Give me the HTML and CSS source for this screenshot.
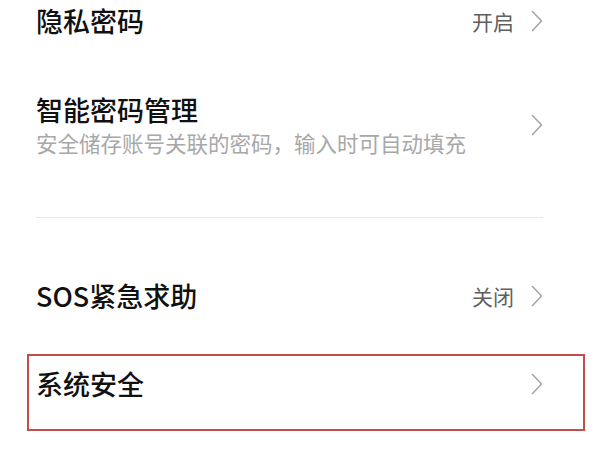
FILE: index.html
```html
<!DOCTYPE html>
<html lang="zh-CN">
<head>
<meta charset="utf-8">
<link rel="stylesheet" href="styles.css">
</head>
<body>
<div class="list">
  <div class="row row-first">
    <div class="main"><div class="title">隐私密码</div></div>
    <span class="value">开启</span>
    <svg class="chev" viewBox="0 0 12 22" width="12" height="22"><polyline points="1.5,1.5 10.5,11 1.5,20.5"/></svg>
  </div>
  <div class="row row-pwd">
    <div class="main">
      <div class="title">智能密码管理</div>
      <div class="sub">安全储存账号关联的密码，输入时可自动填充</div>
    </div>
    <svg class="chev" viewBox="0 0 12 22" width="12" height="22"><polyline points="1.5,1.5 10.5,11 1.5,20.5"/></svg>
  </div>
  <div class="divider"></div>
  <div class="row row-sos">
    <div class="main"><div class="title">SOS紧急求助</div></div>
    <span class="value">关闭</span>
    <svg class="chev" viewBox="0 0 12 22" width="12" height="22"><polyline points="1.5,1.5 10.5,11 1.5,20.5"/></svg>
  </div>
  <div class="row row-sys">
    <div class="main"><div class="title">系统安全</div></div>
    <svg class="chev" viewBox="0 0 12 22" width="12" height="22"><polyline points="1.5,1.5 10.5,11 1.5,20.5"/></svg>
  </div>
</div>
</body>
</html>
```

FILE: styles.css
```css
html, body {
  margin: 0;
  padding: 0;
  background: #ffffff;
}
body {
  width: 600px;
  height: 450px;
  overflow: hidden;
  font-family: "Noto Sans CJK SC", "Noto Sans", sans-serif;
}
.list {
  display: flex;
  flex-direction: column;
}
.row {
  display: flex;
  align-items: center;
  padding: 0 57px 0 36px;
}
.main {
  flex: 1;
  min-width: 0;
}
.title {
  font-size: 27px;
  line-height: 36px;
  font-weight: 500;
  color: #111111;
}
.sub {
  font-size: 21.5px;
  line-height: 30px;
  color: #a8a8a8;
  white-space: nowrap;
}
.value {
  font-size: 21px;
  line-height: 30px;
  color: #5f5f5f;
  margin-right: 17px;
}
.chev {
  flex: none;
  display: block;
}
.chev polyline {
  fill: none;
  stroke: #a6a6a6;
  stroke-width: 1.6;
  stroke-linecap: round;
  stroke-linejoin: round;
}
.row-first {
  padding-top: 3px;
}
.row-pwd {
  margin-top: 53px;
}
.divider {
  height: 1px;
  background: #e6e6e6;
  margin: 59px 57px 0 36px;
}
.row-sos {
  margin-top: 60px;
}
.row-sys {
  margin: 40px 15px 0 27px;
  border: 2px solid #c24d4a;
  padding: 10px 40px 27px 7px;
}
```
